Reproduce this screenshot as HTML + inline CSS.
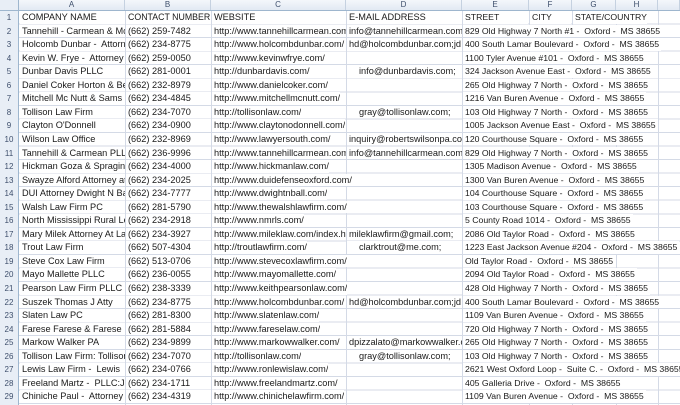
<!DOCTYPE html>
<html><head><meta charset="utf-8"><style>
*{margin:0;padding:0;box-sizing:border-box}
body{width:680px;height:405px;overflow:hidden;background:#fff;font-family:"Liberation Sans",sans-serif;font-size:9.2px;color:#1a1a1a;position:relative}
.vl{position:absolute;top:0;width:1px;height:405px;background:#d4dae6}
.hl{position:absolute;left:0;width:680px;height:405px;top:0;background:repeating-linear-gradient(to bottom,transparent 0,transparent 12.55px,#d4dae6 12.55px,#d4dae6 13.55px);background-position:0 11px}
.hdr{position:absolute;top:0;left:0;width:680px;height:11px;background:linear-gradient(#f4f7fb,#e2e9f3);border-bottom:1px solid #9eb6ce}
.hdr span{position:absolute;top:0;height:10px;line-height:10px;text-align:center;color:#3e4f6c;font-size:8px;border-right:1px solid #c5d1e0}
.rn{position:absolute;left:0;top:11px;width:19px;height:394px;background:#e8eef6;border-right:1px solid #9eb6ce}
.r{position:absolute;left:0;width:680px;height:13.55px}
.r .n{position:absolute;left:0;width:18px;height:12.55px;line-height:13px;text-align:center;color:#3e4f6c;font-size:8px}
.c{position:absolute;top:0;height:12.55px;line-height:13px;white-space:nowrap;overflow:hidden;padding-left:2px;background:#fff}
.a{left:20px;width:105px}
.b{left:126px;width:85px}
.c3{left:212px;width:134px}
.co{left:212px}
.d{left:347px;width:115px}
.dp{padding-left:12px}
.e{left:463px;padding-right:2px;font-size:8.7px}
.corner{position:absolute;left:0;top:0;width:19px;height:11px;background:#e8eef6;border-right:1px solid #9eb6ce;border-bottom:1px solid #9eb6ce}
</style></head><body>
<div class="hl"></div>
<div class="vl" style="left:125px"></div><div class="vl" style="left:211px"></div><div class="vl" style="left:346px"></div><div class="vl" style="left:462px"></div><div class="vl" style="left:529px"></div><div class="vl" style="left:572px"></div><div class="vl" style="left:616px"></div><div class="vl" style="left:658px"></div>
<div class="rn"></div>
<div class="hdr">
<span style="left:19px;width:106px">A</span><span style="left:125px;width:86px">B</span><span style="left:211px;width:135px">C</span><span style="left:346px;width:116px">D</span><span style="left:462px;width:67px">E</span><span style="left:529px;width:43px">F</span><span style="left:572px;width:44px">G</span><span style="left:616px;width:42px">H</span><span style="left:658px;width:22px"></span>
</div>
<div class="corner"></div>

<div class="r" style="top:11px"><div class="n">1</div><div class="c a">COMPANY NAME</div><div class="c b" style="font-size:8.8px">CONTACT NUMBER</div><div class="c c3">WEBSITE</div><div class="c d">E-MAIL ADDRESS</div><div class="c" style="left:463px;width:65px;font-size:8.7px">STREET</div><div class="c" style="left:530px;width:41px;font-size:8.7px">CITY</div><div class="c" style="left:573px;font-size:8.7px">STATE/COUNTRY</div></div>
<div class="r" style="top:24.55px"><div class="n">2</div><div class="c a">Tannehill - Carmean &amp; McKenzie</div><div class="c b">(662) 259-7482</div><div class="c c3">http://www.tannehillcarmean.com/</div><div class="c d">info@tannehillcarmean.com;</div><div class="c e">829 Old Highway 7 North #1 -&nbsp; Oxford -&nbsp; MS 38655</div></div>
<div class="r" style="top:38.1px"><div class="n">3</div><div class="c a">Holcomb Dunbar -&nbsp; Attorneys</div><div class="c b">(662) 234-8775</div><div class="c c3">http://www.holcombdunbar.com/</div><div class="c d">hd@holcombdunbar.com;jd</div><div class="c e">400 South Lamar Boulevard -&nbsp; Oxford -&nbsp; MS 38655</div></div>
<div class="r" style="top:51.65px"><div class="n">4</div><div class="c a">Kevin W. Frye -&nbsp; Attorney at Law</div><div class="c b">(662) 259-0050</div><div class="c co">http://www.kevinwfrye.com/</div><div class="c e">1100 Tyler Avenue #101 -&nbsp; Oxford -&nbsp; MS 38655</div></div>
<div class="r" style="top:65.2px"><div class="n">5</div><div class="c a">Dunbar Davis PLLC</div><div class="c b">(662) 281-0001</div><div class="c co">http://dunbardavis.com/</div><div class="c d dp">info@dunbardavis.com;</div><div class="c e">324 Jackson Avenue East -&nbsp; Oxford -&nbsp; MS 38655</div></div>
<div class="r" style="top:78.75px"><div class="n">6</div><div class="c a">Daniel Coker Horton &amp; Bell</div><div class="c b">(662) 232-8979</div><div class="c co">http://www.danielcoker.com/</div><div class="c e">265 Old Highway 7 North -&nbsp; Oxford -&nbsp; MS 38655</div></div>
<div class="r" style="top:92.3px"><div class="n">7</div><div class="c a">Mitchell Mc Nutt &amp; Sams</div><div class="c b">(662) 234-4845</div><div class="c co">http://www.mitchellmcnutt.com/</div><div class="c e">1216 Van Buren Avenue -&nbsp; Oxford -&nbsp; MS 38655</div></div>
<div class="r" style="top:105.85px"><div class="n">8</div><div class="c a">Tollison Law Firm</div><div class="c b">(662) 234-7070</div><div class="c co">http://tollisonlaw.com/</div><div class="c d dp">gray@tollisonlaw.com;</div><div class="c e">103 Old Highway 7 North -&nbsp; Oxford -&nbsp; MS 38655</div></div>
<div class="r" style="top:119.4px"><div class="n">9</div><div class="c a">Clayton O'Donnell</div><div class="c b">(662) 234-0900</div><div class="c co">http://www.claytonodonnell.com/</div><div class="c e">1005 Jackson Avenue East -&nbsp; Oxford -&nbsp; MS 38655</div></div>
<div class="r" style="top:132.95px"><div class="n">10</div><div class="c a">Wilson Law Office</div><div class="c b">(662) 232-8969</div><div class="c c3">http://www.lawyersouth.com/</div><div class="c d">inquiry@robertswilsonpa.com</div><div class="c e">120 Courthouse Square -&nbsp; Oxford -&nbsp; MS 38655</div></div>
<div class="r" style="top:146.5px"><div class="n">11</div><div class="c a">Tannehill &amp; Carmean PLLC</div><div class="c b">(662) 236-9996</div><div class="c c3">http://www.tannehillcarmean.com/</div><div class="c d">info@tannehillcarmean.com;</div><div class="c e">829 Old Highway 7 North -&nbsp; Oxford -&nbsp; MS 38655</div></div>
<div class="r" style="top:160.05px"><div class="n">12</div><div class="c a">Hickman Goza &amp; Spragins</div><div class="c b">(662) 234-4000</div><div class="c co">http://www.hickmanlaw.com/</div><div class="c e">1305 Madison Avenue -&nbsp; Oxford -&nbsp; MS 38655</div></div>
<div class="r" style="top:173.6px"><div class="n">13</div><div class="c a">Swayze Alford Attorney at Law</div><div class="c b">(662) 234-2025</div><div class="c co">http://www.duidefenseoxford.com/</div><div class="c e">1300 Van Buren Avenue -&nbsp; Oxford -&nbsp; MS 38655</div></div>
<div class="r" style="top:187.15px"><div class="n">14</div><div class="c a">DUI Attorney Dwight N Ball</div><div class="c b">(662) 234-7777</div><div class="c co">http://www.dwightnball.com/</div><div class="c e">104 Courthouse Square -&nbsp; Oxford -&nbsp; MS 38655</div></div>
<div class="r" style="top:200.7px"><div class="n">15</div><div class="c a">Walsh Law Firm PC</div><div class="c b">(662) 281-5790</div><div class="c co">http://www.thewalshlawfirm.com/</div><div class="c e">103 Courthouse Square -&nbsp; Oxford -&nbsp; MS 38655</div></div>
<div class="r" style="top:214.25px"><div class="n">16</div><div class="c a">North Mississippi Rural Legal</div><div class="c b">(662) 234-2918</div><div class="c co">http://www.nmrls.com/</div><div class="c e">5 County Road 1014 -&nbsp; Oxford -&nbsp; MS 38655</div></div>
<div class="r" style="top:227.8px"><div class="n">17</div><div class="c a">Mary Milek Attorney At Law</div><div class="c b">(662) 234-3927</div><div class="c c3">http://www.mileklaw.com/index.html</div><div class="c d">mileklawfirm@gmail.com;</div><div class="c e">2086 Old Taylor Road -&nbsp; Oxford -&nbsp; MS 38655</div></div>
<div class="r" style="top:241.35px"><div class="n">18</div><div class="c a">Trout Law Firm</div><div class="c b">(662) 507-4304</div><div class="c co">http://troutlawfirm.com/</div><div class="c d dp">clarktrout@me.com;</div><div class="c e">1223 East Jackson Avenue #204 -&nbsp; Oxford -&nbsp; MS 38655</div></div>
<div class="r" style="top:254.9px"><div class="n">19</div><div class="c a">Steve Cox Law Firm</div><div class="c b">(662) 513-0706</div><div class="c co">http://www.stevecoxlawfirm.com/</div><div class="c e">Old Taylor Road -&nbsp; Oxford -&nbsp; MS 38655</div></div>
<div class="r" style="top:268.45px"><div class="n">20</div><div class="c a">Mayo Mallette PLLC</div><div class="c b">(662) 236-0055</div><div class="c co">http://www.mayomallette.com/</div><div class="c e">2094 Old Taylor Road -&nbsp; Oxford -&nbsp; MS 38655</div></div>
<div class="r" style="top:282px"><div class="n">21</div><div class="c a">Pearson Law Firm PLLC</div><div class="c b">(662) 238-3339</div><div class="c co">http://www.keithpearsonlaw.com/</div><div class="c e">428 Old Highway 7 North -&nbsp; Oxford -&nbsp; MS 38655</div></div>
<div class="r" style="top:295.55px"><div class="n">22</div><div class="c a">Suszek Thomas J Atty</div><div class="c b">(662) 234-8775</div><div class="c c3">http://www.holcombdunbar.com/</div><div class="c d">hd@holcombdunbar.com;jd</div><div class="c e">400 South Lamar Boulevard -&nbsp; Oxford -&nbsp; MS 38655</div></div>
<div class="r" style="top:309.1px"><div class="n">23</div><div class="c a">Slaten Law PC</div><div class="c b">(662) 281-8300</div><div class="c co">http://www.slatenlaw.com/</div><div class="c e">1109 Van Buren Avenue -&nbsp; Oxford -&nbsp; MS 38655</div></div>
<div class="r" style="top:322.65px"><div class="n">24</div><div class="c a">Farese Farese &amp; Farese</div><div class="c b">(662) 281-5884</div><div class="c co">http://www.fareselaw.com/</div><div class="c e">720 Old Highway 7 North -&nbsp; Oxford -&nbsp; MS 38655</div></div>
<div class="r" style="top:336.2px"><div class="n">25</div><div class="c a">Markow Walker PA</div><div class="c b">(662) 234-9899</div><div class="c c3">http://www.markowwalker.com/</div><div class="c d">dpizzalato@markowwalker.com</div><div class="c e">265 Old Highway 7 North -&nbsp; Oxford -&nbsp; MS 38655</div></div>
<div class="r" style="top:349.75px"><div class="n">26</div><div class="c a">Tollison Law Firm: Tollison</div><div class="c b">(662) 234-7070</div><div class="c co">http://tollisonlaw.com/</div><div class="c d dp">gray@tollisonlaw.com;</div><div class="c e">103 Old Highway 7 North -&nbsp; Oxford -&nbsp; MS 38655</div></div>
<div class="r" style="top:363.3px"><div class="n">27</div><div class="c a">Lewis Law Firm -&nbsp; Lewis</div><div class="c b">(662) 234-0766</div><div class="c co">http://www.ronlewislaw.com/</div><div class="c e">2621 West Oxford Loop -&nbsp; Suite C. -&nbsp; Oxford -&nbsp; MS 38655</div></div>
<div class="r" style="top:376.85px"><div class="n">28</div><div class="c a">Freeland Martz -&nbsp; PLLC:J. Rhea</div><div class="c b">(662) 234-1711</div><div class="c co">http://www.freelandmartz.com/</div><div class="c e">405 Galleria Drive -&nbsp; Oxford -&nbsp; MS 38655</div></div>
<div class="r" style="top:390.4px"><div class="n">29</div><div class="c a">Chiniche Paul -&nbsp; Attorney</div><div class="c b">(662) 234-4319</div><div class="c co">http://www.chinichelawfirm.com/</div><div class="c e">1109 Van Buren Avenue -&nbsp; Oxford -&nbsp; MS 38655</div></div>
</body></html>
